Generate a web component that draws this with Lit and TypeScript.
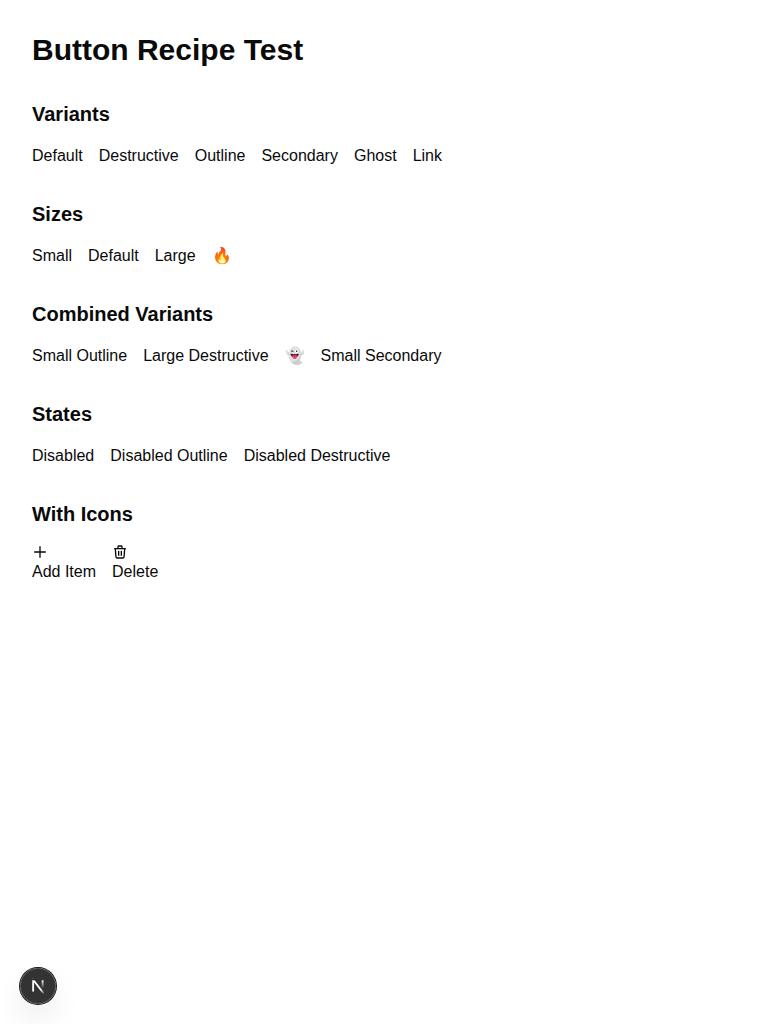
import { LitElement, html, css, svg } from "lit";
import { customElement } from "lit/decorators.js";

@customElement("app-root")
export class AppRoot extends LitElement {
  static styles = css`
    :host {
      display: block;
      min-height: 100vh;
      box-sizing: border-box;
      padding: 32px;
      background: #fff;
      color: #0a0a0a;
      font: 16px/24px "Liberation Sans", Arial, sans-serif;
    }
    h1 { margin: 0 0 32px; font-size: 30px; line-height: 36px; font-weight: 700; }
    section { margin-bottom: 32px; }
    h2 { margin: 0 0 16px; font-size: 20px; line-height: 28px; font-weight: 600; }
    .row { display: flex; gap: 16px; }
    button {
      margin: 0; padding: 0; border: 0; background: transparent;
      color: inherit; font: inherit; text-align: left;
    }
    button svg { display: block; width: 16px; height: 16px; }
    .badge {
      position: fixed; left: 20px; bottom: 20px;
      width: 36px; height: 36px; border-radius: 50%;
      background: rgba(0, 0, 0, 0.8);
      box-shadow: 0 0 0 1px #171717, inset 0 0 0 1px rgba(255, 255, 255, 0.14),
        0 16px 32px -8px rgba(0, 0, 0, 0.24);
    }
    .badge svg { display: block; width: 36px; height: 36px; }
  `;

  private section(title: string, items: unknown[]) {
    return html`<section>
      <h2>${title}</h2>
      <div class="row">${items.map((i) => html`<button>${i}</button>`)}</div>
    </section>`;
  }

  private icon(paths: unknown) {
    return html`<svg viewBox="0 0 24 24" fill="none" stroke="currentColor" stroke-width="2" stroke-linecap="round" stroke-linejoin="round">${paths}</svg>`;
  }

  render() {
    const plus = this.icon(svg`<path d="M12 4v16m8-8H4"/>`);
    const trash = this.icon(svg`<path d="M19 7l-.867 12.142A2 2 0 0116.138 21H7.862a2 2 0 01-1.995-1.858L5 7m5 4v6m4-6v6m1-10V4a1 1 0 00-1-1h-4a1 1 0 00-1 1v3M4 7h16"/>`);
    return html`
      <h1>Button Recipe Test</h1>
      ${this.section("Variants", ["Default", "Destructive", "Outline", "Secondary", "Ghost", "Link"])}
      ${this.section("Sizes", ["Small", "Default", "Large", "🔥"])}
      ${this.section("Combined Variants", ["Small Outline", "Large Destructive", "👻", "Small Secondary"])}
      ${this.section("States", ["Disabled", "Disabled Outline", "Disabled Destructive"])}
      ${this.section("With Icons", [html`${plus}Add Item`, html`${trash}Delete`])}
      <div class="badge">
        <svg viewBox="0 0 36 36" fill="none">
          <defs>
            <linearGradient id="d" x1="9.956" y1="11.123" x2="15.478" y2="17.967" gradientUnits="userSpaceOnUse">
              <stop stop-color="#fff"/><stop offset="0.604" stop-color="#fff" stop-opacity="0"/>
            </linearGradient>
            <linearGradient id="v" x1="11.822" y1="1.4" x2="11.792" y2="9.625" gradientUnits="userSpaceOnUse">
              <stop stop-color="#fff"/><stop offset="1" stop-color="#fff" stop-opacity="0"/>
            </linearGradient>
            <mask id="m"><rect width="100%" height="100%" fill="#fff"/><rect width="5" height="1.5" fill="#000"/></mask>
          </defs>
          <g transform="translate(10.8 10.8)" stroke-width="1.86">
            <path d="M13.3 15.2 2.34 1v11.6" stroke="url(#d)" mask="url(#m)"/>
            <path d="M11.825 1.5v11.6" stroke="url(#v)"/>
          </g>
        </svg>
      </div>
    `;
  }
}
